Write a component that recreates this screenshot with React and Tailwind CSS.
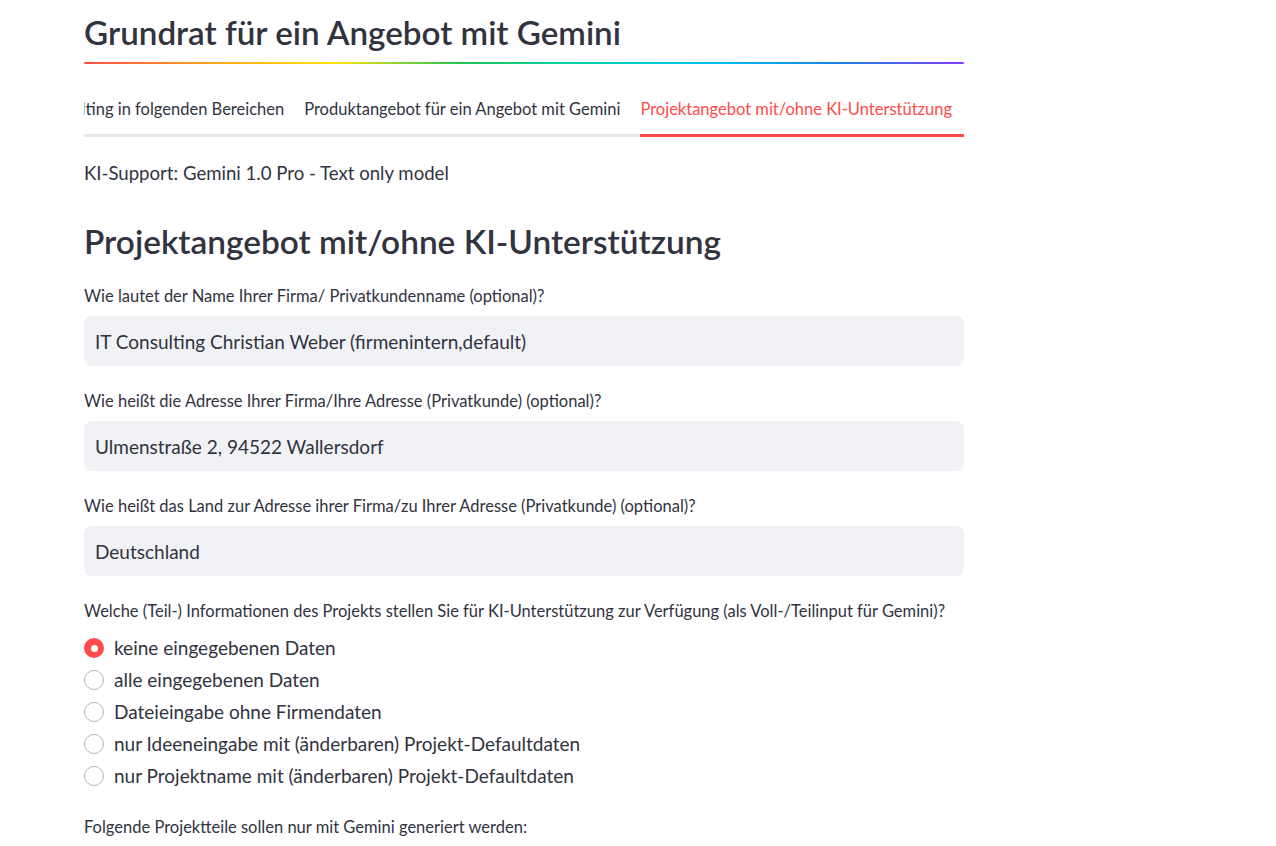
import { useState } from "react";

const tabs = [
  "Consulting in folgenden Bereichen",
  "Produktangebot für ein Angebot mit Gemini",
  "Projektangebot mit/ohne KI-Unterstützung",
];

const fields = [
  {
    label: "Wie lautet der Name Ihrer Firma/ Privatkundenname (optional)?",
    value: "IT Consulting Christian Weber (firmenintern,default)",
  },
  {
    label: "Wie heißt die Adresse Ihrer Firma/Ihre Adresse (Privatkunde) (optional)?",
    value: "Ulmenstraße 2, 94522 Wallersdorf",
  },
  {
    label: "Wie heißt das Land zur Adresse ihrer Firma/zu Ihrer Adresse (Privatkunde) (optional)?",
    value: "Deutschland",
  },
];

const options = [
  "keine eingegebenen Daten",
  "alle eingegebenen Daten",
  "Dateieingabe ohne Firmendaten",
  "nur Ideeneingabe mit (änderbaren) Projekt-Defaultdaten",
  "nur Projektname mit (änderbaren) Projekt-Defaultdaten",
];

export default function App() {
  const [choice, setChoice] = useState(0);
  const [values, setValues] = useState(fields.map((f) => f.value));

  return (
    <div
      className="min-h-[846px] bg-white text-[#31333f] pl-[84px]"
      style={{ fontFamily: '"Source Sans Pro", Lato, "Noto Sans", sans-serif' }}
    >
      <div className="w-[880px] pt-[13px]">
        {/* Header */}
        <h1 className="text-[33.2px] leading-[38px] font-semibold">
          Grundrat für ein Angebot mit Gemini
        </h1>
        <div className="mt-[11px] h-[2px] rounded-full bg-[linear-gradient(to_right,#ff4b4b,#ffa421,#ffe312,#21c354,#00d4b1,#00c0f2,#1c83e1,#803df5)]" />

        {/* Tabs (scrolled to the end, first one clipped) */}
        <div className="mt-[33px] flex justify-end gap-2 overflow-hidden shadow-[inset_0_-3px_0_0_#e8e8ec]">
          {tabs.map((t, i) => (
            <div
              key={t}
              className={`shrink-0 whitespace-nowrap text-[16.5px] leading-6 pr-3 pb-[13px] border-b-[3px] ${
                i === 2 ? "text-[#ff4b4b] border-[#ff4b4b]" : "border-transparent"
              }`}
            >
              {t}
            </div>
          ))}
        </div>

        <p className="mt-6 text-[18.6px] leading-6">KI-Support: Gemini 1.0 Pro - Text only model</p>

        <h2 className="mt-9 text-[33.4px] leading-10 font-semibold">
          Projektangebot mit/ohne KI-Unterstützung
        </h2>

        {fields.map((f, i) => (
          <div key={f.label} className="mt-[25px]">
            <label className="block text-[16.5px] leading-5">{f.label}</label>
            <input
              value={values[i]}
              onChange={(e) => {
                const next = [...values];
                next[i] = e.target.value;
                setValues(next);
              }}
              className="mt-[10px] w-full h-[50px] rounded-lg bg-[#f0f2f6] pl-[11px] text-[19px] text-[#31333f] outline-none"
            />
          </div>
        ))}

        <p className="mt-[25px] text-[16.5px] leading-5">
          Welche (Teil-) Informationen des Projekts stellen Sie für KI-Unterstützung zur Verfügung (als Voll-/Teilinput für Gemini)?
        </p>
        <div className="mt-[11px] flex flex-col">
          {options.map((o, i) => (
            <button
              key={o}
              onClick={() => setChoice(i)}
              className="h-8 flex items-center gap-[10px] text-left"
            >
              {choice === i ? (
                <span className="w-5 h-5 rounded-full bg-[#ff4b4b] flex items-center justify-center">
                  <span className="w-[7px] h-[7px] rounded-full bg-white" />
                </span>
              ) : (
                <span className="w-5 h-5 rounded-full border-[1.5px] border-[#b4b6bc] bg-white" />
              )}
              <span className="text-[19px] leading-6">{o}</span>
            </button>
          ))}
        </div>

        <p className="mt-[25px] text-[16.5px] leading-5">
          Folgende Projektteile sollen nur mit Gemini generiert werden:
        </p>
      </div>
    </div>
  );
}
